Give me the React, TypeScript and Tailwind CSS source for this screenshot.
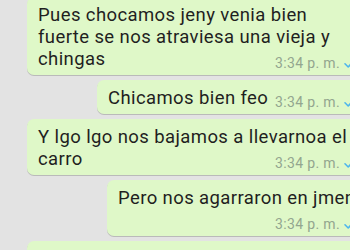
import React from "react";

function Checks() {
  return (
    <svg width="16" height="11" viewBox="0 0 16 11" className="shrink-0">
      <path d="M1 5.8 L4.2 9 L10.5 2" fill="none" stroke="#4fb6ec" strokeWidth="1.6" strokeLinecap="round" strokeLinejoin="round" />
      <path d="M6.5 8.2 L7.3 9 L13.6 2" fill="none" stroke="#4fb6ec" strokeWidth="1.6" strokeLinecap="round" strokeLinejoin="round" />
    </svg>
  );
}

function Time() {
  return (
    <div className="absolute right-[8px] bottom-[5px] flex items-center gap-[4px] text-[14px] leading-[14px] tracking-[0.35px] text-[#93a68f]">
      <span>3:34 p. m.</span>
      <Checks />
    </div>
  );
}

function Bubble({ w, lines, time = true }: { w: string; lines: string[]; time?: boolean }) {
  return (
    <div
      className={`relative ${w} rounded-[7px] bg-[#dff8c8] pl-[11px] pr-[8px] pt-[7px] pb-[5px] shadow-[0_1px_0.5px_rgba(0,0,0,0.18)]`}
    >
      {lines.map((l, i) => (
        <div key={i} className="whitespace-nowrap text-[18.5px] leading-[22px] tracking-[0.4px] text-[#1f1f1f]">
          {l === "" ? "\u00a0" : l}
        </div>
      ))}
      {time && <Time />}
    </div>
  );
}

export default function App() {
  return (
    <div
      className="w-[350px] h-[250px] overflow-hidden bg-[#e3e3e3]"
      style={{ fontFamily: "Roboto, 'Noto Sans', sans-serif" }}
    >
      <div className="w-[376px] -mt-[3px] flex flex-col items-end gap-[5px]">
        <div className="mr-[8px]">
          <Bubble
            w="w-[341px]"
            lines={["Pues chocamos jeny venia bien", "fuerte se nos atraviesa una vieja y", "chingas"]}
          />
        </div>
        <div className="mr-[8px]">
          <Bubble w="w-[271px]" lines={["Chicamos bien feo"]} />
        </div>
        <div className="mr-[8px]">
          <Bubble w="w-[341px]" lines={["Y lgo lgo nos bajamos a llevarnoa el", "carro"]} />
        </div>
        <div className="mr-[8px]">
          <Bubble w="w-[261px]" lines={["Pero nos agarraron en jmenez", ""]} />
        </div>
        <div className="mr-[8px]">
          <Bubble w="w-[341px]" lines={["", ""]} time={false} />
        </div>
      </div>
    </div>
  );
}
